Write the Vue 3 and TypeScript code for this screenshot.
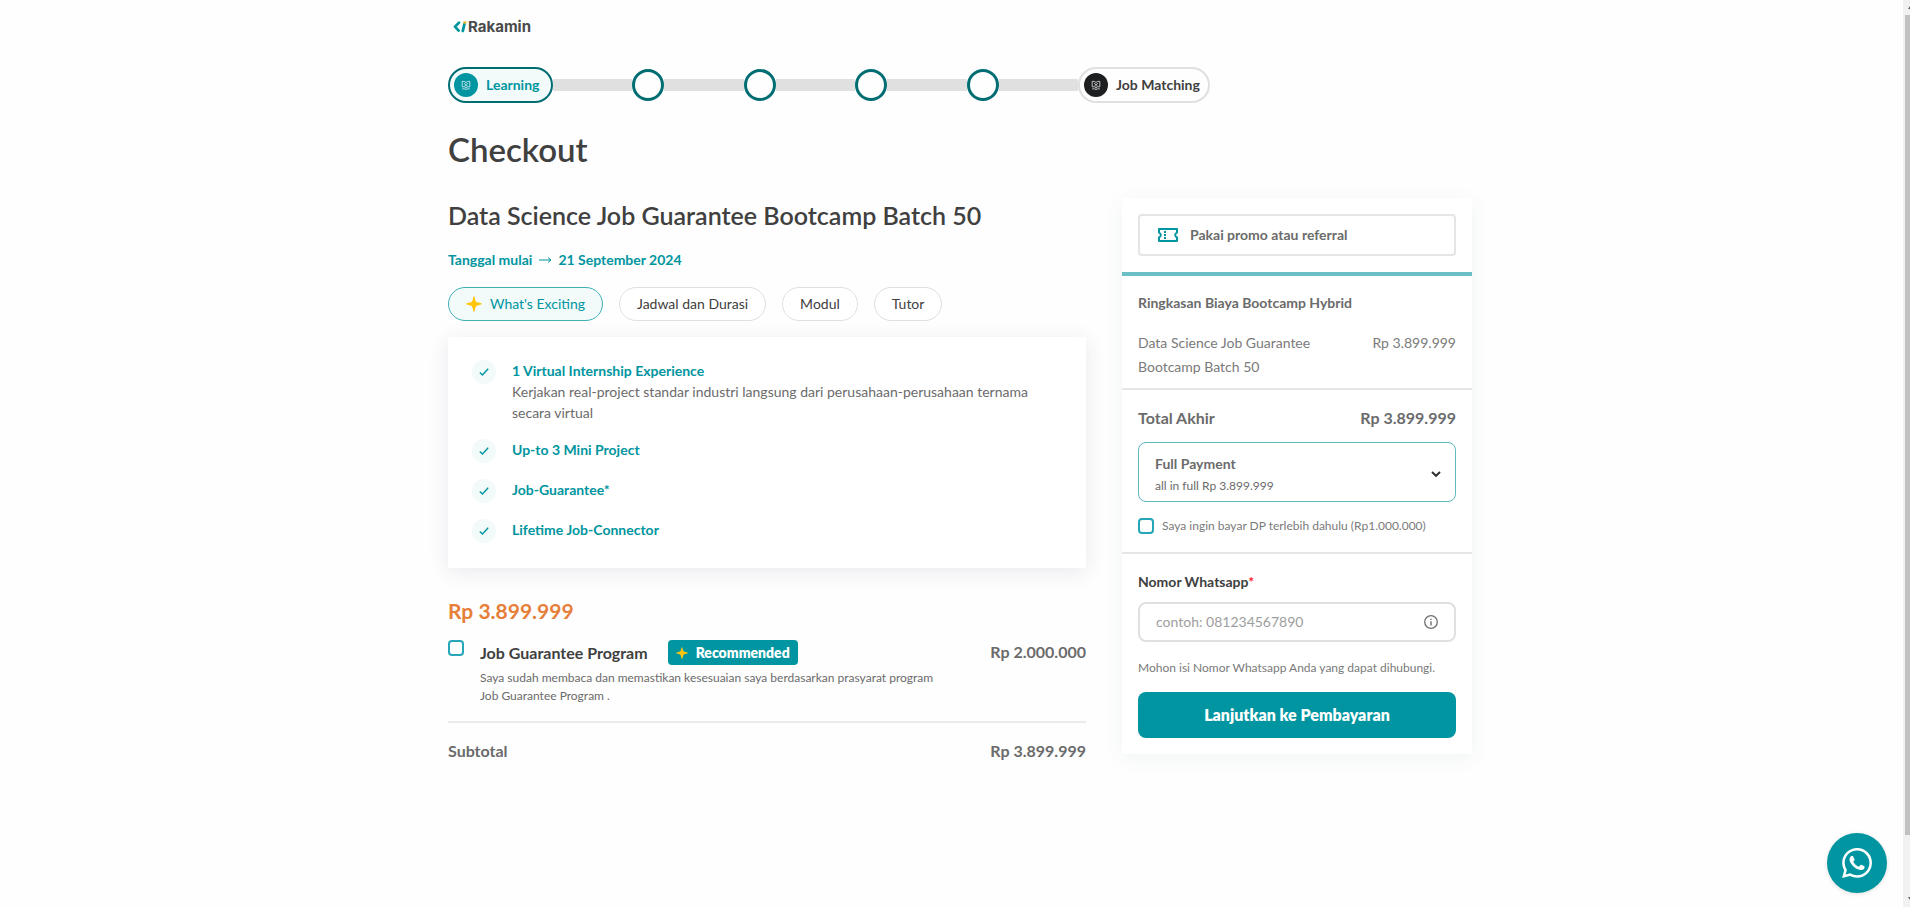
<script setup lang="ts">
import { ref } from 'vue'

interface Feature {
  title: string
  detail?: string
}

const tabs: string[] = ["What's Exciting", 'Jadwal dan Durasi', 'Modul', 'Tutor']
const activeTab = ref(0)

const features: Feature[] = [
  {
    title: '1 Virtual Internship Experience',
    detail: 'Kerjakan real-project standar industri langsung dari perusahaan-perusahaan ternama secara virtual',
  },
  { title: 'Up-to 3 Mini Project' },
  { title: 'Job-Guarantee*' },
  { title: 'Lifetime Job-Connector' },
]

const guarantee = ref(false)
const downPayment = ref(false)
const plan = ref('full')
const phone = ref('')
</script>

<template>
  <div class="page">
    <header class="logo">
      <svg class="logo-mark" viewBox="0 0 14 12" aria-hidden="true">
        <path d="M6 1.6 2 5.7 5.6 9.6" fill="none" stroke="#0095a0" stroke-width="2.7" stroke-linecap="round" stroke-linejoin="round" />
        <path d="M11.4 3.2 9.8 10" fill="none" stroke="#0095a0" stroke-width="2.8" stroke-linecap="round" />
        <path d="M11.4 1.4 12.4 1.4" fill="none" stroke="#fbb92c" stroke-width="2.4" stroke-linecap="round" />
      </svg>
      <span>Rakamin</span>
    </header>

    <ol class="stepper">
      <li class="pill pill-active">
        <span class="pill-icon">
          <svg viewBox="0 0 10 10" aria-hidden="true">
            <path d="M5 2.6 3.4 1.4H1.2V6.8H3.4L5 8 6.6 6.8H8.8V1.4H6.6ZM3 3.4 5 4.6 7 3.4M3.6 5.8H6.4M1.2 8.8H3L5 9.4 7 8.8H8.8" />
          </svg>
        </span>
        Learning
      </li>
      <template v-for="n in 4" :key="n">
        <li class="bar" aria-hidden="true"></li>
        <li class="dot"></li>
      </template>
      <li class="bar" aria-hidden="true"></li>
      <li class="pill pill-end">
        <span class="pill-icon">
          <svg viewBox="0 0 10 10" aria-hidden="true">
            <path d="M5 2.6 3.4 1.4H1.2V6.8H3.4L5 8 6.6 6.8H8.8V1.4H6.6ZM3 3.4 5 4.6 7 3.4M3.6 5.8H6.4M1.2 8.8H3L5 9.4 7 8.8H8.8" />
          </svg>
        </span>
        Job Matching
      </li>
    </ol>

    <h1>Checkout</h1>

    <div class="columns">
      <main class="program">
        <h2>Data Science Job Guarantee Bootcamp Batch 50</h2>
        <p class="start">
          Tanggal mulai
          <svg viewBox="0 0 14 8" aria-hidden="true"><path d="M1 4h12M10 1.5 13 4 10 6.5" /></svg>
          21 September 2024
        </p>

        <div class="tabs">
          <button v-for="(tab, i) in tabs" :key="tab" type="button" :class="{ active: i === activeTab }" @click="activeTab = i">
            <svg v-if="i === 0" class="spark" viewBox="0 0 16 16" aria-hidden="true">
              <path d="M8 0.2C9 0.2 9.2 4.8 10.2 5.8 11.2 6.8 15.8 7 15.8 8S11.2 9.2 10.2 10.2C9.2 11.2 9 15.8 8 15.8S6.8 11.2 5.8 10.2C4.8 9.2 0.2 9 0.2 8S4.8 6.8 5.8 5.8C6.8 4.8 7 0.2 8 0.2Z" />
            </svg>
            {{ tab }}
          </button>
        </div>

        <ul class="features">
          <li v-for="f in features" :key="f.title">
            <span class="check">
              <svg viewBox="0 0 10 10" aria-hidden="true"><path d="M0.8 5.6 3.4 8 9.2 1.8" /></svg>
            </span>
            <div>
              <strong>{{ f.title }}</strong>
              <p v-if="f.detail">{{ f.detail }}</p>
            </div>
          </li>
        </ul>

        <p class="price">Rp 3.899.999</p>

        <div class="addon">
          <input id="guarantee" v-model="guarantee" type="checkbox" />
          <div class="addon-body">
            <div class="addon-title">
              <label for="guarantee">Job Guarantee Program</label>
              <span class="badge">
                <svg class="spark" viewBox="0 0 16 16" aria-hidden="true">
                  <path d="M8 0.2C9 0.2 9.2 4.8 10.2 5.8 11.2 6.8 15.8 7 15.8 8S11.2 9.2 10.2 10.2C9.2 11.2 9 15.8 8 15.8S6.8 11.2 5.8 10.2C4.8 9.2 0.2 9 0.2 8S4.8 6.8 5.8 5.8C6.8 4.8 7 0.2 8 0.2Z" />
                </svg>
                Recommended
              </span>
            </div>
            <p>Saya sudah membaca dan memastikan kesesuaian saya berdasarkan prasyarat program Job Guarantee Program .</p>
          </div>
          <span class="amount">Rp 2.000.000</span>
        </div>

        <div class="subtotal">
          <span>Subtotal</span>
          <span>Rp 3.899.999</span>
        </div>
      </main>

      <aside class="summary">
        <section class="promo">
          <button type="button">
            <svg viewBox="0 0 20 14" aria-hidden="true">
              <path d="M1 1h18v3.6a2.5 2.5 0 0 0 0 4.8V13H1V9.4a2.5 2.5 0 0 0 0-4.8Z" fill="none" stroke="currentColor" stroke-width="2" stroke-linejoin="round" />
              <path d="M6 3h2v2H6zM6 6h2v2H6zM6 9h2v2H6z" fill="currentColor" />
            </svg>
            Pakai promo atau referral
          </button>
        </section>

        <section class="costs">
          <h3>Ringkasan Biaya Bootcamp Hybrid</h3>
          <div class="cost-row">
            <span class="cost-name">Data Science Job Guarantee Bootcamp Batch 50</span>
            <span>Rp 3.899.999</span>
          </div>
        </section>

        <section class="payment">
          <div class="total">
            <span>Total Akhir</span>
            <span>Rp 3.899.999</span>
          </div>
          <label class="plan">
            <span class="plan-body">
              <select v-model="plan" aria-label="Metode pembayaran">
                <option value="full">Full Payment</option>
              </select>
              <span>all in full Rp 3.899.999</span>
            </span>
            <svg viewBox="0 0 10 8" aria-hidden="true"><path d="M1 2 5 5.8 9 2" /></svg>
          </label>
          <label class="dp">
            <input v-model="downPayment" type="checkbox" />
            Saya ingin bayar DP terlebih dahulu (Rp1.000.000)
          </label>
        </section>

        <section class="contact">
          <label for="phone">Nomor Whatsapp<span class="required">*</span></label>
          <div class="field">
            <input id="phone" v-model="phone" type="tel" placeholder="contoh: 081234567890" />
            <svg viewBox="0 0 14 14" aria-hidden="true">
              <circle cx="7" cy="7" r="6.3" fill="none" stroke="currentColor" stroke-width="1.3" />
              <path d="M6.3 6.2h1.4V10.4H6.3zM6.3 3.7h1.4V5H6.3z" fill="currentColor" />
            </svg>
          </div>
          <p>Mohon isi Nomor Whatsapp Anda yang dapat dihubungi.</p>
          <button type="button" class="pay">Lanjutkan ke Pembayaran</button>
        </section>
      </aside>
    </div>

    <button type="button" class="chat" aria-label="WhatsApp">
      <svg viewBox="0 0 24 24" aria-hidden="true">
        <path d="M17.472 14.382c-.297-.149-1.758-.867-2.03-.967-.273-.099-.471-.148-.67.15-.197.297-.767.966-.94 1.164-.173.199-.347.223-.644.075-.297-.15-1.255-.463-2.39-1.475-.883-.788-1.48-1.761-1.653-2.059-.173-.297-.018-.458.13-.606.134-.133.298-.347.446-.52.149-.174.198-.298.298-.497.099-.198.05-.371-.025-.52-.075-.149-.669-1.612-.916-2.207-.242-.579-.487-.5-.669-.51-.173-.008-.371-.01-.57-.01-.198 0-.52.074-.792.372-.272.297-1.04 1.016-1.04 2.479 0 1.462 1.065 2.875 1.213 3.074.149.198 2.096 3.2 5.077 4.487.709.306 1.262.489 1.694.625.712.227 1.36.195 1.871.118.571-.085 1.758-.719 2.006-1.413.248-.694.248-1.289.173-1.413-.074-.124-.272-.198-.57-.347m-5.421 7.403h-.004a9.87 9.87 0 0 1-5.031-1.378l-.361-.214-3.741.982.998-3.648-.235-.374a9.86 9.86 0 0 1-1.51-5.26c.001-5.45 4.436-9.884 9.888-9.884 2.64 0 5.122 1.03 6.988 2.898a9.825 9.825 0 0 1 2.893 6.994c-.003 5.45-4.437 9.884-9.885 9.884m8.413-18.297A11.815 11.815 0 0 0 12.05 0C5.495 0 .16 5.335.157 11.892c0 2.096.547 4.142 1.588 5.945L.057 24l6.305-1.654a11.882 11.882 0 0 0 5.683 1.448h.005c6.554 0 11.89-5.335 11.893-11.893a11.821 11.821 0 0 0-3.48-8.413Z" />
      </svg>
    </button>

    <div class="scrollbar" aria-hidden="true">
      <svg viewBox="0 0 7 4"><path d="M7 0v3H5Z" /></svg>
      <div class="track"><div class="thumb"></div></div>
      <svg viewBox="0 0 7 4"><path d="M5 0h2v3Z" /></svg>
    </div>
  </div>
</template>

<style>
body {
  margin: 0;
  background: #fefefe;
}
</style>

<style scoped>
* {
  box-sizing: border-box;
}

.page {
  max-width: 1034px;
  margin: 0 auto;
  padding: 0 0 24px 10px;
  font-family: Lato, 'Open Sans', sans-serif;
  font-size: 14px;
  line-height: 20px;
  color: #404040;
}

h1, h2, h3, p, ul, ol {
  margin: 0;
  padding: 0;
  list-style: none;
}

button, input, select {
  font: inherit;
  color: inherit;
}

button {
  cursor: pointer;
}

.logo {
  display: flex;
  align-items: center;
  gap: 1px;
  height: 67px;
  padding: 0 0 14px 5px;
  font-family: Inter, sans-serif;
  font-size: 15px;
  font-weight: 700;
  color: #4a4a4a;
}

.logo-mark {
  width: 14px;
  height: 12px;
}

.stepper {
  display: flex;
  align-items: center;
  max-width: 762px;
}

.bar {
  flex: 1;
  height: 12px;
  background: #e0e0e0;
}

.dot {
  width: 32px;
  height: 32px;
  border: 3px solid #006d73;
  border-radius: 50%;
}

.pill {
  display: flex;
  align-items: center;
  gap: 8px;
  height: 36px;
  padding: 0 8px 0 4px;
  border: 2px solid #e0e0e0;
  border-radius: 18px;
  font-weight: 700;
}

.pill-active {
  min-width: 105px;
  border-color: #006d73;
  background: #f2fafa;
  color: #0095a0;
}

.pill-end {
  min-width: 132px;
  background: #fefefe;
}

.pill-icon {
  display: flex;
  align-items: center;
  justify-content: center;
  width: 24px;
  height: 24px;
  border-radius: 50%;
  background: #0095a0;
}

.pill-end .pill-icon {
  background: #1d1f20;
}

.pill-icon svg {
  width: 10px;
  height: 10px;
  fill: none;
  stroke: #ffffff;
  stroke-width: 0.7;
}

h1 {
  margin-top: 26px;
  font-size: 33px;
  line-height: 40px;
  font-weight: 600;
}

.columns {
  display: grid;
  grid-template-columns: 1fr 350px;
  gap: 36px;
  align-items: start;
  margin-top: 29px;
}

.program {
  min-width: 0;
}

h2 {
  margin-top: 1px;
  font-size: 25px;
  line-height: 32px;
  font-weight: 600;
}

.start {
  display: flex;
  align-items: center;
  gap: 6px;
  margin-top: 19px;
  font-weight: 700;
  color: #0095a0;
}

.start svg {
  width: 14px;
  height: 8px;
  fill: none;
  stroke: currentColor;
}

.tabs {
  display: flex;
  flex-wrap: wrap;
  gap: 16px;
  margin-top: 17px;
}

.tabs button {
  display: flex;
  align-items: center;
  gap: 8px;
  height: 34px;
  padding: 0 17px;
  border: 1px solid #e0e0e0;
  border-radius: 17px;
  background: #ffffff;
}

.tabs .active {
  border-color: #40b0b7;
  background: #f2fafa;
  color: #0095a0;
}

.spark {
  width: 16px;
  height: 16px;
  fill: #fdc60c;
}

.features {
  display: grid;
  gap: 16px;
  margin-top: 16px;
  padding: 23px 24px 25px;
  background: #ffffff;
  box-shadow: 0 4px 20px rgba(40, 50, 90, 0.1);
}

.features li {
  display: flex;
  gap: 16px;
  line-height: 21px;
}

.features strong {
  display: block;
  font-weight: 700;
  color: #0095a0;
}

.features p {
  color: #6b6b6b;
}

.check {
  display: flex;
  flex: none;
  align-items: center;
  justify-content: center;
  width: 24px;
  height: 24px;
  border-radius: 50%;
  background: #f2fafa;
}

.check svg {
  width: 10px;
  height: 10px;
  fill: none;
  stroke: #0095a0;
  stroke-width: 1.4;
}

.price {
  margin-top: 28px;
  font-size: 21px;
  line-height: 30px;
  font-weight: 700;
  color: #e67f3a;
}

.addon {
  display: flex;
  gap: 16px;
  align-items: flex-start;
  margin-top: 14px;
  padding-bottom: 16px;
  border-bottom: 2px solid #ebebeb;
}

input[type='checkbox'] {
  flex: none;
  appearance: none;
  width: 16px;
  height: 16px;
  margin: 0;
  border: 2px solid #25a6b8;
  border-radius: 4px;
  background: #ffffff;
}

input[type='checkbox']:checked {
  background: #25a6b8;
}

.addon-body {
  flex: 1;
}

.addon-title {
  display: flex;
  align-items: center;
  gap: 20px;
  font-size: 16px;
  font-weight: 700;
}

.badge {
  display: flex;
  align-items: center;
  gap: 8px;
  height: 25px;
  padding: 0 8px;
  border-radius: 4px;
  background: #0095a0;
  color: #ffffff;
  font-size: 14px;
  font-weight: 800;
}

.badge .spark {
  width: 12px;
  height: 12px;
}

.addon-body p {
  max-width: 472px;
  margin-top: 4px;
  font-size: 12px;
  line-height: 18px;
  color: #6b6b6b;
}

.amount,
.subtotal {
  font-size: 16px;
  line-height: 24px;
  font-weight: 700;
  color: #6b6b6b;
}

.subtotal {
  display: flex;
  justify-content: space-between;
  margin-top: 16px;
}

.summary {
  background: #ffffff;
  box-shadow: 0 4px 20px rgba(0, 80, 70, 0.06);
  color: #6b6b6b;
}

.summary section {
  padding: 16px;
  border-bottom: 2px solid #e5e5e5;
}

.summary .promo {
  border-bottom: 4px solid #6bbec4;
}

.promo button {
  display: flex;
  align-items: center;
  gap: 12px;
  width: 100%;
  height: 42px;
  padding: 0 18px;
  border: 2px solid #e5e5e5;
  border-radius: 4px;
  background: #ffffff;
  font-weight: 700;
}

.promo svg {
  width: 20px;
  height: 14px;
  color: #0095a0;
}

h3 {
  font-size: 14px;
  line-height: 24px;
  font-weight: 700;
}

.summary .costs {
  padding: 15px 16px 9px;
}

.cost-row {
  display: flex;
  justify-content: space-between;
  margin-top: 16px;
  line-height: 24px;
  color: #7a7a7a;
}

.cost-name {
  max-width: 200px;
}

.total {
  display: flex;
  justify-content: space-between;
  font-size: 16px;
  line-height: 24px;
  font-weight: 700;
}

.plan {
  display: flex;
  align-items: center;
  justify-content: space-between;
  height: 60px;
  margin-top: 12px;
  padding: 4px 14px 0 16px;
  border: 1px solid #5cbac1;
  border-radius: 8px;
}

.plan-body {
  display: flex;
  flex: 1;
  flex-direction: column;
  gap: 3px;
  font-size: 12px;
  line-height: 18px;
}

.plan select {
  appearance: none;
  width: 100%;
  padding: 0;
  border: 0;
  background: transparent;
  font-size: 14px;
  line-height: 20px;
  font-weight: 700;
}

.plan svg {
  width: 10px;
  height: 8px;
  fill: none;
  stroke: #303030;
  stroke-width: 2;
}

.dp {
  display: flex;
  align-items: center;
  gap: 8px;
  margin-top: 14px;
  font-size: 12px;
  color: #7a7a7a;
}

.summary .contact {
  border-bottom: 0;
}

.contact label {
  display: block;
  margin-top: 2px;
  font-weight: 700;
  color: #404040;
}

.required {
  color: #f5222d;
}

.field {
  display: flex;
  align-items: center;
  height: 40px;
  margin-top: 10px;
  padding: 0 16px;
  border: 2px solid #e0e0e0;
  border-radius: 8px;
}

.field input {
  flex: 1;
  min-width: 0;
  padding: 0;
  border: 0;
  outline: 0;
  background: transparent;
}

.field input::placeholder {
  color: #9e9e9e;
}

.field svg {
  width: 14px;
  height: 14px;
  color: #707070;
}

.contact p {
  margin-top: 16px;
  font-size: 12px;
  color: #7a7a7a;
}

.pay {
  display: block;
  width: 100%;
  height: 46px;
  margin-top: 14px;
  border: 0;
  border-radius: 8px;
  background: #0095a0;
  color: #ffffff;
  font-size: 16px;
  font-weight: 800;
}

.chat {
  position: fixed;
  right: 23px;
  bottom: 14px;
  display: flex;
  align-items: center;
  justify-content: center;
  width: 60px;
  height: 60px;
  padding: 0;
  border: 0;
  border-radius: 50%;
  background: #0095a0;
  box-shadow: 0 1px 4px rgba(0, 0, 0, 0.12);
}

.chat svg {
  width: 30px;
  height: 30px;
  fill: #ffffff;
}

.scrollbar {
  position: fixed;
  top: 0;
  right: 0;
  bottom: 0;
  display: flex;
  flex-direction: column;
  width: 7px;
  padding: 6px 0;
  background: #f1f1f1;
}

.scrollbar svg {
  flex: none;
  width: 7px;
  height: 4px;
  fill: #606060;
}

.track {
  flex: 1;
  padding: 5px 0 0 2px;
}

.thumb {
  height: 93%;
  background: #c1c1c1;
}
</style>
